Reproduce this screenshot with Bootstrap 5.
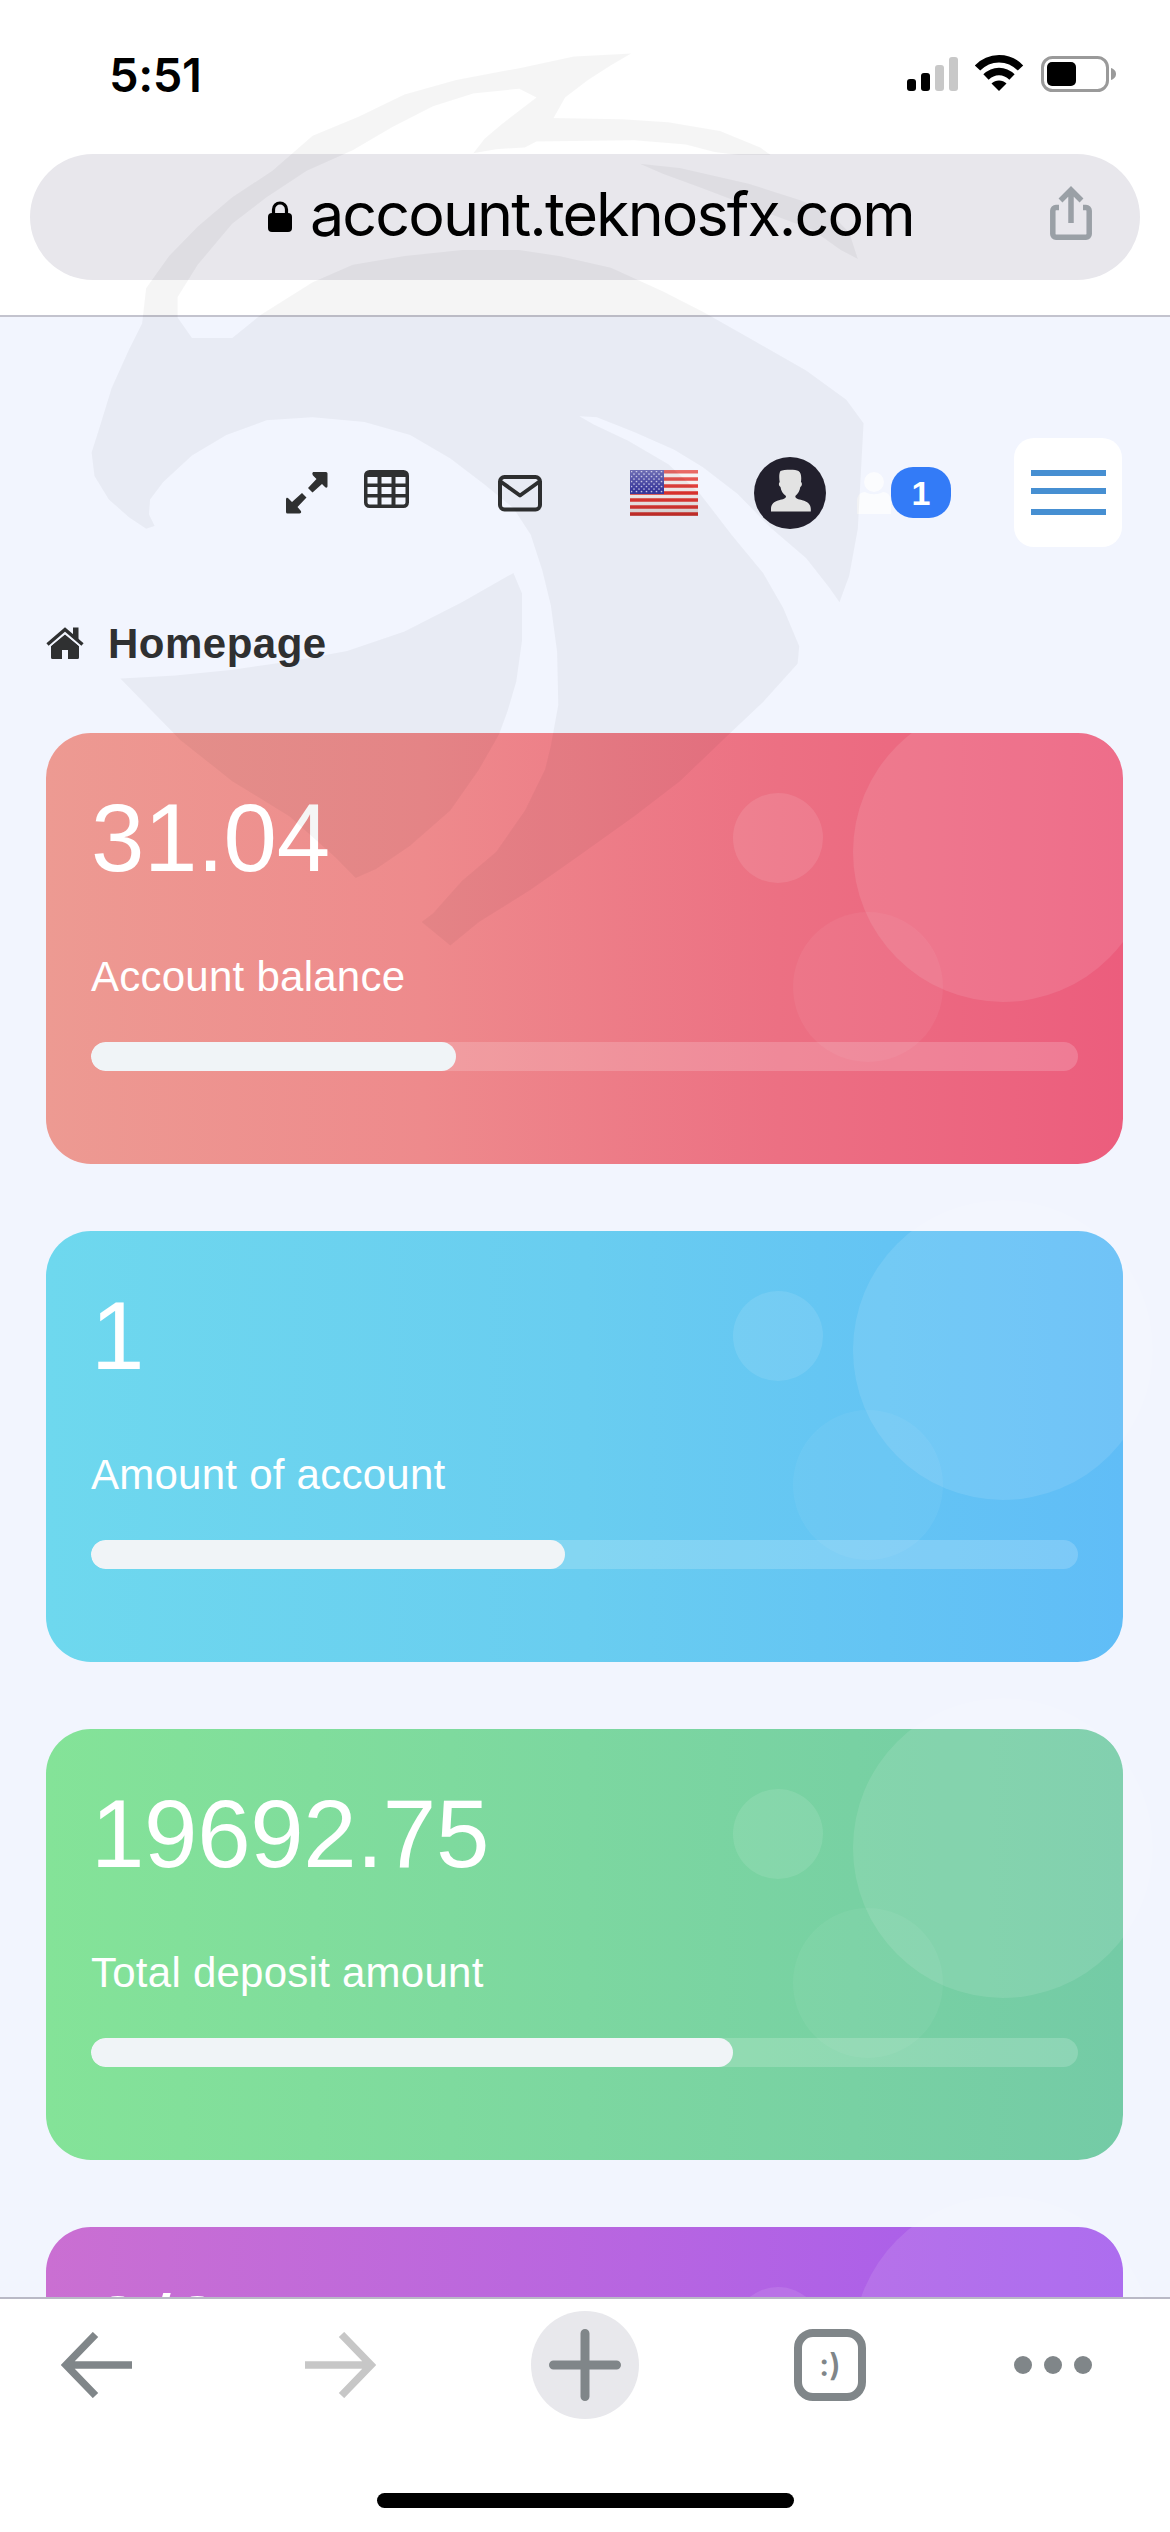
<!DOCTYPE html>
<html lang="en">
<head>
<meta charset="utf-8">
<meta name="viewport" content="width=device-width, initial-scale=1">
<title>Homepage</title>
<link href="https://cdn.jsdelivr.net/npm/bootstrap@5.3.0/dist/css/bootstrap.min.css" rel="stylesheet">
<style>
body{width:1170px;height:2532px;overflow:hidden;background:#f2f5fe;font-family:"Liberation Sans",Arial,sans-serif;color:#2f3031}
svg{display:block;flex:none}
.ios{font-family:Inter,"Liberation Sans",sans-serif;color:#000}
.top-chrome{height:317px;border-bottom:2px solid #c3c3ce}
.status{height:154px;padding:54px 54px 0 109px}
.clock{font-size:47px;font-weight:600;line-height:41px;letter-spacing:-.4px}
.omnibox{height:126px;margin:0 30px;border-radius:63px;background:#e8e7ec;padding:0 48px 0 238px}
.omnibox .url{font-size:61px;line-height:120px;height:126px;margin-left:18px;letter-spacing:-1.9px;white-space:nowrap}
.tools{height:109px;margin-top:121px;padding:0 48px 0 286px}
.icon-grid{margin:-7px 0 0 36px}
.icon-mail{margin:2px 0 0 89px}
.icon-flag{margin-left:88px}
.icon-avatar{margin-left:56px}
.icon-ghost{margin-left:31px}
.count{width:60px;height:51px;border-radius:22px;background:#337bf7;font-size:34px;padding:0}
.burger{width:108px;height:109px;border-radius:20px;background:#fff}
.crumb{margin-top:68px;height:56px;padding-left:46px;font-size:42px;letter-spacing:.5px}
.crumb span{margin-left:24px}
.cards{margin-top:62px;padding:0 47px 0 46px;gap:67px}
.stat{height:431px;border:0;border-radius:45px;color:#fff;padding:0 45px}
.stat .value{font-size:96px;line-height:100px;margin-top:55px;letter-spacing:-.3px}
.g4 .value{margin-top:53px}
.stat .caption{font-size:42px;line-height:48px;margin-top:65px;letter-spacing:.25px}
.stat .progress{height:29px;margin-top:41px;border-radius:15px;background:rgba(255,255,255,.18)}
.stat .progress-bar{background:#f0f4f7;border-radius:15px}
.bub{position:absolute;border-radius:50%;background:rgba(255,255,255,.1)}
.b1{width:300px;height:300px;left:807px;top:-31px}
.b2{width:90px;height:90px;left:687px;top:60px;background:rgba(255,255,255,.1)}
.b3{width:150px;height:150px;left:747px;top:179px;background:rgba(255,255,255,.05)}
.g1{background:linear-gradient(90deg,#ed9a92,#ee8a8c 35%,#ec7083 68%,#ec5d7d)}
.g2{background:linear-gradient(90deg,#6ed8ee,#69cdf0 50%,#60bdf7)}
.g3{background:linear-gradient(90deg,#84e398,#7cd7a0 50%,#74cba6)}
.g4{background:linear-gradient(90deg,#ca6fd2,#b765e1 55%,#a45dee)}
.g1{overflow:hidden}
.bottom-chrome{height:235px;border-top:2px solid #b9b9c6}
.bottom-chrome .keys{height:131px;padding-left:61px}
.key-fwd{margin-left:173px}
.plus{width:108px;height:108px;border-radius:50%;background:#e8e8ec;margin-left:155px}
.tabs-key{width:72px;height:72px;border:8px solid #808689;border-radius:19px;color:#808689;font-size:31px;font-weight:600;line-height:1;margin-left:155px}
.key-more{margin-left:148px}
.home-bar{width:417px;height:15px;border-radius:8px;background:#000;margin-top:63px}
.crest{position:absolute;left:0;top:0;z-index:20;pointer-events:none}
</style>
</head>
<body class="position-relative d-flex flex-column">
<header class="ios top-chrome bg-white flex-shrink-0">
  <div class="status d-flex justify-content-between align-items-start">
    <div class="clock">5:51</div>
    <svg width="209" height="40" viewBox="0 0 209 40">
      <g fill="#000"><rect y="25" width="9" height="12" rx="3"/><rect x="14" y="19" width="9" height="18" rx="3"/><g fill="#c8c8c8"><rect x="28" y="11" width="9" height="26" rx="3"/><rect x="42" y="3" width="9" height="34" rx="3"/></g></g>
      <path d="M92 37l-7.500-7.500c4-4 11-4 15 0z"/>
      <path d="M70.500 14c12-12.500 31-12.500 43 0M79 23c7.500-7.500 18.500-7.500 26 0" fill="none" stroke="#000" stroke-width="7.500"/>
      <rect x="135.500" y="3.500" width="65" height="33" rx="10" fill="none" stroke="#9a9a9a" stroke-width="3"/><rect x="140" y="8" width="29" height="24" rx="5"/><path d="M204 14c4 1.500 5 4 5 6s-1 4.500-5 6z" fill="#9a9a9a"/>
    </svg>
  </div>
  <div class="omnibox d-flex align-items-center">
    <svg width="24" height="32" viewBox="0 0 24 32"><rect y="12" width="24" height="19" rx="4"/><path d="M5.500 14V8.500a6.500 6.500 0 0 1 13 0V14" fill="none" stroke="#000" stroke-width="3.200"/></svg>
    <span class="url">account.teknosfx.com</span>
    <svg class="ms-auto mb-2" width="42" height="54" viewBox="0 0 42 54" fill="none" stroke="#9aa0a6" stroke-width="5.500"><path d="M9 21.500H6a3.200 3.200 0 0 0-3.200 3.200V48A3.200 3.200 0 0 0 6 51.200h30a3.200 3.200 0 0 0 3.200-3.200V24.700a3.200 3.200 0 0 0-3.200-3.200h-3M21 37V5M10.500 14.500L21 4l10.500 10.500"/></svg>
  </div>
</header>

<main class="flex-grow-1 overflow-hidden">
  <nav class="tools d-flex align-items-center">
    <svg width="42" height="42" viewBox="0 0 42 42" fill="#2f3031"><path d="M28 0h12a1.500 1.500 0 0 1 1.500 1.500V14c0 2-1.500 2-2.500 1l-3-3-9.500 8.500-4.500-4.500 8.500-9L27 3.500c-1-1.500-1-3.500 1-3.500zM13.500 41.500h-12A1.500 1.500 0 0 1 0 40V27.500c0-2 1.500-2 2.500-1L6 30l10-9 4.500 4.500L11.500 35l3 3.500c1 1 1 3-1 3z"/></svg>
    <svg class="icon-grid" width="45" height="39" viewBox="0 0 45 39"><rect width="45" height="38" rx="5.500" fill="#2f3031"/><g fill="#f2f5fe"><path d="M3.500 7h10v6.500h-10zM17.500 7h10v6.500h-10zM31.500 7h10v6.500h-10zM3.500 17h10v7h-10zM17.500 17h10v7h-10zM31.500 17h10v7h-10zM3.500 27.500h10v7h-8a2 2 0 0 1-2-2zM17.500 27.500h10v7h-10zM31.500 27.500h10v5a2 2 0 0 1-2 2h-8z"/></g></svg>
    <svg class="icon-mail" width="44" height="37" viewBox="0 0 44 37" fill="none" stroke="#2f3031" stroke-width="4" stroke-linejoin="round"><rect x="2" y="2" width="40" height="32.500" rx="4.500"/><path d="M2.500 6.500L22 20.500 41.500 6.500"/></svg>
    <svg class="icon-flag" width="68" height="46" viewBox="0 0 68 46">
      <defs><pattern id="st" width="5" height="5" patternUnits="userSpaceOnUse"><circle cx="1.500" cy="1.500" r=".85" fill="#c8c8ee"/><circle cx="4" cy="4" r=".85" fill="#c8c8ee"/></pattern><linearGradient id="sh" x2="0" y2="1"><stop stop-color="#fff" stop-opacity=".3"/><stop offset=".45" stop-color="#fff" stop-opacity="0"/><stop offset="1" stop-color="#000" stop-opacity=".14"/></linearGradient></defs>
      <rect width="68" height="46" fill="#f6eeee"/><path d="M0 1.800h68M0 8.900h68M0 16h68M0 23h68M0 30h68M0 37h68M0 44h68" stroke="#e0312c" stroke-width="3.500"/><rect width="34" height="24" fill="#3938a0"/><rect x="1" y="1" width="32" height="22" fill="url(#st)"/><rect width="68" height="46" fill="url(#sh)"/>
    </svg>
    <svg class="icon-avatar" width="72" height="72" viewBox="0 0 72 72"><circle cx="36" cy="36" r="36" fill="#24222f"/><path d="M17 54.500V52c0-5 3-7.500 8-8.800 4-1 7-1.500 7-4.200-3-2-5-5-5.500-9-2-1-2-4-.8-5-.7-4-.7-9 .8-11 3-1.500 15-2 18 0 3 2 3 7 2.500 11 1.500 1 1 4-.7 5-.5 4-2.500 7-5 9 0 2.700 3 3.200 7 4.200 5 1.300 8.500 3.800 8.500 8.800v2.500z" fill="#ededed"/></svg>
    <svg class="icon-ghost" width="34" height="43" viewBox="0 0 34 43" fill="#fff" opacity=".7"><circle cx="17" cy="11" r="10"/><path d="M0 43V30c0-6 4-9 8-9 6 3 12 3 18 0 4 0 8 3 8 9v13z"/></svg>
    <span class="count badge d-flex align-items-center justify-content-center">1</span>
    <div class="burger d-flex align-items-center justify-content-center ms-auto"><svg width="75" height="46" viewBox="0 0 75 46" fill="#468fd2"><path d="M0 0h75v6H0zM0 18h75v6H0zM0 39h75v6H0z"/></svg></div>
  </nav>
  <div class="crumb d-flex align-items-center fw-bold">
    <svg width="38" height="33" viewBox="0 0 38 33" fill="#2f3031"><path d="M19 7.500L33 19v11.500a1.500 1.500 0 0 1-1.500 1.500H22v-9h-6v9H6.500A1.500 1.500 0 0 1 5 30.500V19z"/><path d="M1.500 18L19 3l17.500 15" fill="none" stroke="#f2f5fe" stroke-width="6"/><path d="M1.500 17.500L19 2.500l17.500 15" fill="none" stroke="#2f3031" stroke-width="3.400"/><path d="M27 .5h5.500v13L27 8.500z"/></svg>
    <span>Homepage</span>
  </div>

  <section class="cards d-flex flex-column">
    <article class="card stat g1"><div class="value">31.04</div><div class="caption">Account balance</div><div class="progress"><div class="progress-bar" style="width:37%"></div></div><i class="bub b1"></i><i class="bub b2"></i><i class="bub b3"></i></article>
    <article class="card stat g2"><div class="value">1</div><div class="caption">Amount of account</div><div class="progress"><div class="progress-bar" style="width:48%"></div></div><i class="bub b1"></i><i class="bub b2"></i><i class="bub b3"></i></article>
    <article class="card stat g3"><div class="value">19692.75</div><div class="caption">Total deposit amount</div><div class="progress"><div class="progress-bar" style="width:65%"></div></div><i class="bub b1"></i><i class="bub b2"></i><i class="bub b3"></i></article>
    <article class="card stat g4"><div class="value">0/0</div><i class="bub b1"></i><i class="bub b2"></i></article>
  </section>
</main>

<footer class="ios bottom-chrome bg-white flex-shrink-0">
  <div class="keys d-flex align-items-center">
    <svg width="71" height="66" viewBox="0 0 71 66" fill="none" stroke="#808689" stroke-width="7.500"><path d="M71 33H6M34.500 2.500L5 33l29.500 30.500"/></svg>
    <svg class="key-fwd" width="71" height="66" viewBox="0 0 71 66" fill="none" stroke="#c7c7c7" stroke-width="7.500"><path d="M0 33h65M36.500 2.500L66 33 36.500 63.500"/></svg>
    <div class="plus d-flex align-items-center justify-content-center"><svg width="72" height="72" viewBox="0 0 72 72" stroke="#808689" stroke-width="9" stroke-linecap="round"><path d="M36 4.500v63M4.500 36h63"/></svg></div>
    <div class="tabs-key d-flex align-items-center justify-content-center">:)</div>
    <svg class="key-more" width="78" height="18" viewBox="0 0 78 18" fill="#808689"><circle cx="9" cy="9" r="9"/><circle cx="39" cy="9" r="9"/><circle cx="69" cy="9" r="9"/></svg>
  </div>
  <div class="home-bar mx-auto"></div>
</footer>

<svg class="crest" width="1170" height="960" viewBox="0 0 1170 960">
  <g transform="translate(60 30) scale(.574 .5869)" fill="#000" fill-opacity=".04">
    <path d="M995 40L895 45 800 65 690 85 600 110 520 148 440 180 370 240 300 285 240 335 190 385 150 440 143 500 120 545 90 610 68 680 55 720 60 760 85 800 120 830 150 850 165 845 155 825 157 800 180 770 230 725 290 690 360 665 440 660 530 668 610 690 680 730 740 775 790 815 820 860 840 920 855 980 866 1060 868 1150 855 1220 845 1260 810 1330 760 1400 700 1450 650 1505 630 1520 655 1540 680 1560 730 1520 820 1465 900 1410 1000 1340 1080 1280 1160 1205 1225 1145 1285 1080 1288 1050 1260 985 1225 925 1170 860 1115 790 1060 740 990 700 930 672 905 658 935 660 1000 685 1070 715 1120 745 1180 790 1240 850 1300 900 1340 950 1358 975 1375 930 1390 850 1400 670 1370 630 1300 580 1210 530 1120 480 1050 445 960 405 870 385 800 375 700 375 600 385 510 400 440 430 350 485 300 525 230 525 205 490 205 455 240 400 300 330 360 285 430 240 510 205 580 165 650 130 720 108 800 100 830 115 770 160 740 185 720 210 760 203 810 200 830 190 1000 188 1090 195 1140 208 1180 213 1238 213 1220 200 1150 172 1060 157 980 152 860 150 880 115 920 85 960 60z"/>
    <path d="M1010 228L1080 235 1200 262 1290 290 1340 310 1375 345 1390 390 1360 375 1310 340 1200 300 1120 270 1050 245z"/>
    <path d="M790 925L805 960 805 1040 795 1110 780 1160 765 1200 730 1260 680 1330 610 1390 550 1430 515 1445 480 1410 400 1340 300 1280 210 1210 170 1170 105 1105 200 1100 300 1090 400 1076 500 1058 600 1025 700 975z"/>
  </g>
</svg>
<script src="https://cdn.jsdelivr.net/npm/bootstrap@5.3.0/dist/js/bootstrap.bundle.min.js"></script>
</body>
</html>
